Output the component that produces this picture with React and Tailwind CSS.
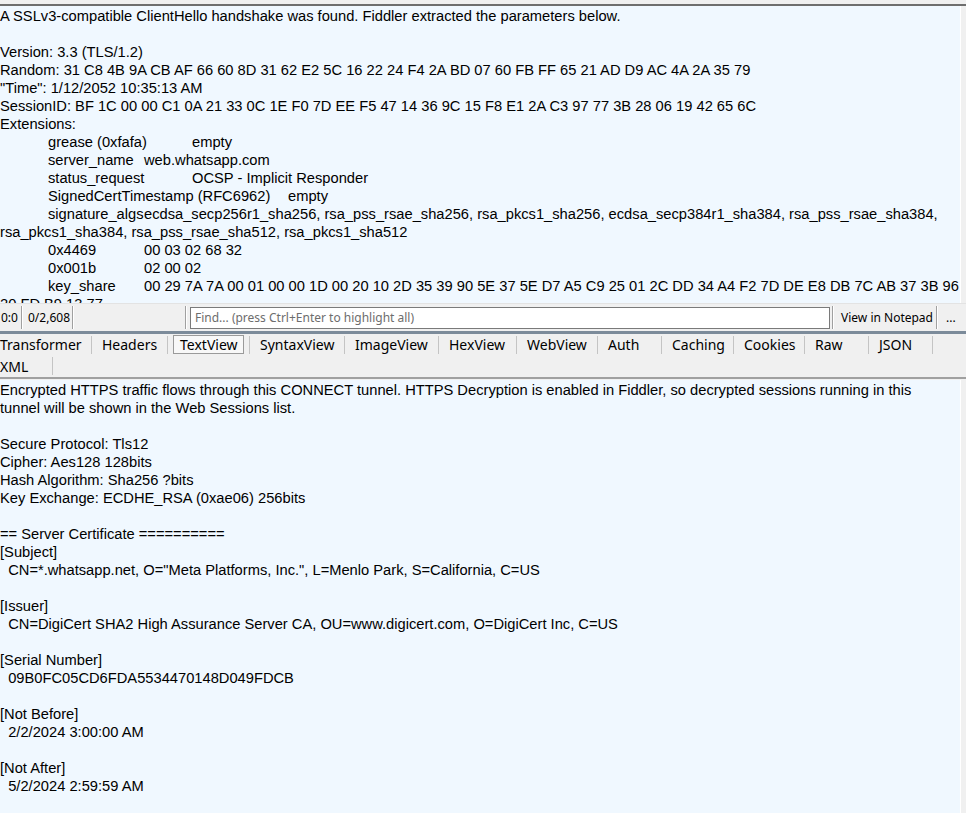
const upperLines = [
  "A SSLv3-compatible ClientHello handshake was found. Fiddler extracted the parameters below.",
  "",
  "Version: 3.3 (TLS/1.2)",
  "Random: 31 C8 4B 9A CB AF 66 60 8D 31 62 E2 5C 16 22 24 F4 2A BD 07 60 FB FF 65 21 AD D9 AC 4A 2A 35 79",
  '"Time": 1/12/2052 10:35:13 AM',
  "SessionID: BF 1C 00 00 C1 0A 21 33 0C 1E F0 7D EE F5 47 14 36 9C 15 F8 E1 2A C3 97 77 3B 28 06 19 42 65 6C",
  "Extensions:",
  ["grease (0xfafa)", "w-[144px]", "empty"],
  ["server_name", "w-[96px]", "web.whatsapp.com"],
  ["status_request", "w-[144px]", "OCSP - Implicit Responder"],
  ["SignedCertTimestamp (RFC6962)", "w-[240px]", "empty"],
  [
    "signature_algs",
    "w-[96px]",
    "ecdsa_secp256r1_sha256, rsa_pss_rsae_sha256, rsa_pkcs1_sha256, ecdsa_secp384r1_sha384, rsa_pss_rsae_sha384,",
  ],
  "rsa_pkcs1_sha384, rsa_pss_rsae_sha512, rsa_pkcs1_sha512",
  ["0x4469", "w-[96px]", "00 03 02 68 32"],
  ["0x001b", "w-[96px]", "02 00 02"],
  [
    "key_share",
    "w-[96px]",
    "00 29 7A 7A 00 01 00 00 1D 00 20 10 2D 35 39 90 5E 37 5E D7 A5 C9 25 01 2C DD 34 A4 F2 7D DE E8 DB 7C AB 37 3B 96",
  ],
  "20 FD B9 13 77",
];

const lowerLines = [
  "Encrypted HTTPS traffic flows through this CONNECT tunnel. HTTPS Decryption is enabled in Fiddler, so decrypted sessions running in this",
  "tunnel will be shown in the Web Sessions list.",
  "",
  "Secure Protocol: Tls12",
  "Cipher: Aes128 128bits",
  "Hash Algorithm: Sha256 ?bits",
  "Key Exchange: ECDHE_RSA (0xae06) 256bits",
  "",
  "== Server Certificate ==========",
  "[Subject]",
  '  CN=*.whatsapp.net, O="Meta Platforms, Inc.", L=Menlo Park, S=California, C=US',
  "",
  "[Issuer]",
  "  CN=DigiCert SHA2 High Assurance Server CA, OU=www.digicert.com, O=DigiCert Inc, C=US",
  "",
  "[Serial Number]",
  "  09B0FC05CD6FDA5534470148D049FDCB",
  "",
  "[Not Before]",
  "  2/2/2024 3:00:00 AM",
  "",
  "[Not After]",
  "  5/2/2024 2:59:59 AM",
];

const tabs = [
  ["Transformer", 92],
  ["Headers", 76],
  ["TextView", 82],
  ["SyntaxView", 95],
  ["ImageView", 94],
  ["HexView", 78],
  ["WebView", 81],
  ["Auth", 64],
  ["Caching", 72],
  ["Cookies", 71],
  ["Raw", 64],
  ["JSON", 64],
];

const TextPanel = ({ lines, className }) => (
  <div className={`flex bg-[#f0f0f0] ${className}`}>
    <div className="w-[961px] shrink-0 overflow-hidden border-r border-white bg-[#f0f8ff] pt-px font-['Liberation_Sans',Arial,sans-serif] text-[14.7px] leading-[18px] text-black whitespace-pre">
      {lines.map((l, i) =>
        Array.isArray(l) ? (
          <div key={i} className="flex h-[18px]">
            <span className="w-[48px] shrink-0" />
            <span className={`${l[1]} shrink-0`}>{l[0]}</span>
            <span>{l[2]}</span>
          </div>
        ) : (
          <div key={i} className="h-[18px]">
            {l}
          </div>
        )
      )}
    </div>
  </div>
);

const Sep = () => (
  <div className="h-[23px] w-[2px] shrink-0 border-l border-[#a0a0a0] border-r border-r-white" />
);

export default function App() {
  return (
    <div className="flex h-[813px] w-[966px] flex-col overflow-hidden bg-[#f0f0f0]">
      {/* top edge */}
      <div className="h-[4px] shrink-0 bg-[#f0f0f0]" />
      <div className="h-[2px] shrink-0 bg-[#6e6e6e]" />

      <TextPanel lines={upperLines} className="h-[297px] shrink-0" />

      {/* status / find bar */}
      <div className="flex h-[28px] shrink-0 items-center whitespace-nowrap border-t border-[#e3e3e3] bg-[#f0f0f0] font-['Noto_Sans',sans-serif] text-[12px] text-black">
        <div className="w-[21px] shrink-0 pl-px">0:0</div>
        <Sep />
        <div className="w-[49px] shrink-0 pl-[5px]">0/2,608</div>
        <Sep />
        <div className="w-[111px] shrink-0" />
        <Sep />
        <div className="ml-[3px] flex h-[22px] w-[640px] shrink-0 items-center border border-[#7a7a7a] bg-white pl-[4px] text-[#6d6d6d]">
          Find... (press Ctrl+Enter to highlight all)
        </div>
        <div className="ml-[2px]">
          <Sep />
        </div>
        <div className="w-[102px] shrink-0 pl-[7px]">View in Notepad</div>
        <Sep />
        <div className="pl-[8px]">...</div>
      </div>

      {/* splitter */}
      <div className="h-[3px] shrink-0 bg-[#7c8b9a]" />

      {/* tabs */}
      <div className="flex shrink-0 flex-col bg-[#f0f0f0] font-['Noto_Sans',sans-serif] text-[14px] text-black">
        <div className="flex h-[21px] items-center">
          {tabs.map(([name, w], i) =>
            name === "TextView" ? (
              <div key={name} style={{ width: w }} className="flex h-[18px] items-center border-r border-[#c4c4c4]">
                <div className="ml-[5px] flex h-[19px] w-[71px] items-center border border-[#9a9a9a] bg-[#f8f8f8] pl-[6px]">
                  {name}
                </div>
              </div>
            ) : (
              <div
                key={name}
                style={{ width: w }}
                className={`flex h-[18px] items-center border-r border-[#c4c4c4] ${i === 0 ? "pl-0" : "pl-[10px]"}`}
              >
                {name}
              </div>
            )
          )}
        </div>
        <div className="flex h-[22px] items-center">
          <div className="flex h-[18px] w-[53px] items-center border-r border-[#c4c4c4]">XML</div>
        </div>
      </div>

      <div className="h-[2px] shrink-0 bg-[#a0a0a0]" />
      <div className="h-px shrink-0 bg-[#f0f0f0]" />

      <TextPanel lines={lowerLines} className="flex-1" />
    </div>
  );
}
